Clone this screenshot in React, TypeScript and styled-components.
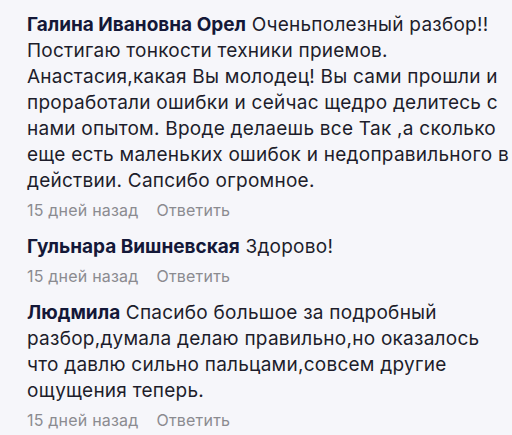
import styled, { createGlobalStyle } from "styled-components";

const GlobalStyle = createGlobalStyle`
  html, body {
    margin: 0;
    padding: 0;
    background: #f6f6fa;
  }
`;

type CommentData = {
    name: string;
    text: string;
    time: string;
};

const comments: CommentData[] = [
    {
        name: "Галина Ивановна Орел",
        text: "Оченьполезный разбор!! Постигаю тонкости техники приемов. Анастасия,какая Вы молодец! Вы сами прошли и проработали ошибки и сейчас щедро делитесь с нами опытом. Вроде делаешь все Так ,а сколько еще есть маленьких ошибок и недоправильного в действии. Сапсибо огромное.",
        time: "15 дней назад",
    },
    {
        name: "Гульнара Вишневская",
        text: "Здорово!",
        time: "15 дней назад",
    },
    {
        name: "Людмила",
        text: "Спасибо большое за подробный разбор,думала делаю правильно,но оказалось что давлю сильно пальцами,совсем другие ощущения теперь.",
        time: "15 дней назад",
    },
];

export default function App() {
    return <>
        <GlobalStyle />
        <List>
            {comments.map((c, i) => (
                <Comment key={i}>
                    <Body>
                        <Name>{c.name}</Name> {c.text}
                    </Body>
                    <Meta>
                        <span>{c.time}</span>
                        <Reply>Ответить</Reply>
                    </Meta>
                </Comment>
            ))}
        </List>
    </>
}

const List = styled.div`
    width: 512px;
    height: 435px;
    box-sizing: border-box;
    padding: 12px 0 0 27px;
    background: #f6f6fa;
    font-family: Inter, "Noto Sans", sans-serif;
    display: flex;
    flex-direction: column;
    gap: 14px;
    overflow: hidden;
`

const Comment = styled.div`
    display: flex;
    flex-direction: column;
    gap: 6px;
`

const Body = styled.p`
    margin: 0;
    font-size: 19px;
    line-height: 26px;
    letter-spacing: 0.25px;
    color: #1d1d2b;
`

const Name = styled.span`
    font-weight: 700;
    letter-spacing: 0;
    color: #141838;
`

const Meta = styled.div`
    display: flex;
    gap: 18px;
    font-size: 16px;
    line-height: 20px;
    letter-spacing: 0.2px;
    color: #8b8b90;
`

const Reply = styled.span`
    cursor: pointer;
`
